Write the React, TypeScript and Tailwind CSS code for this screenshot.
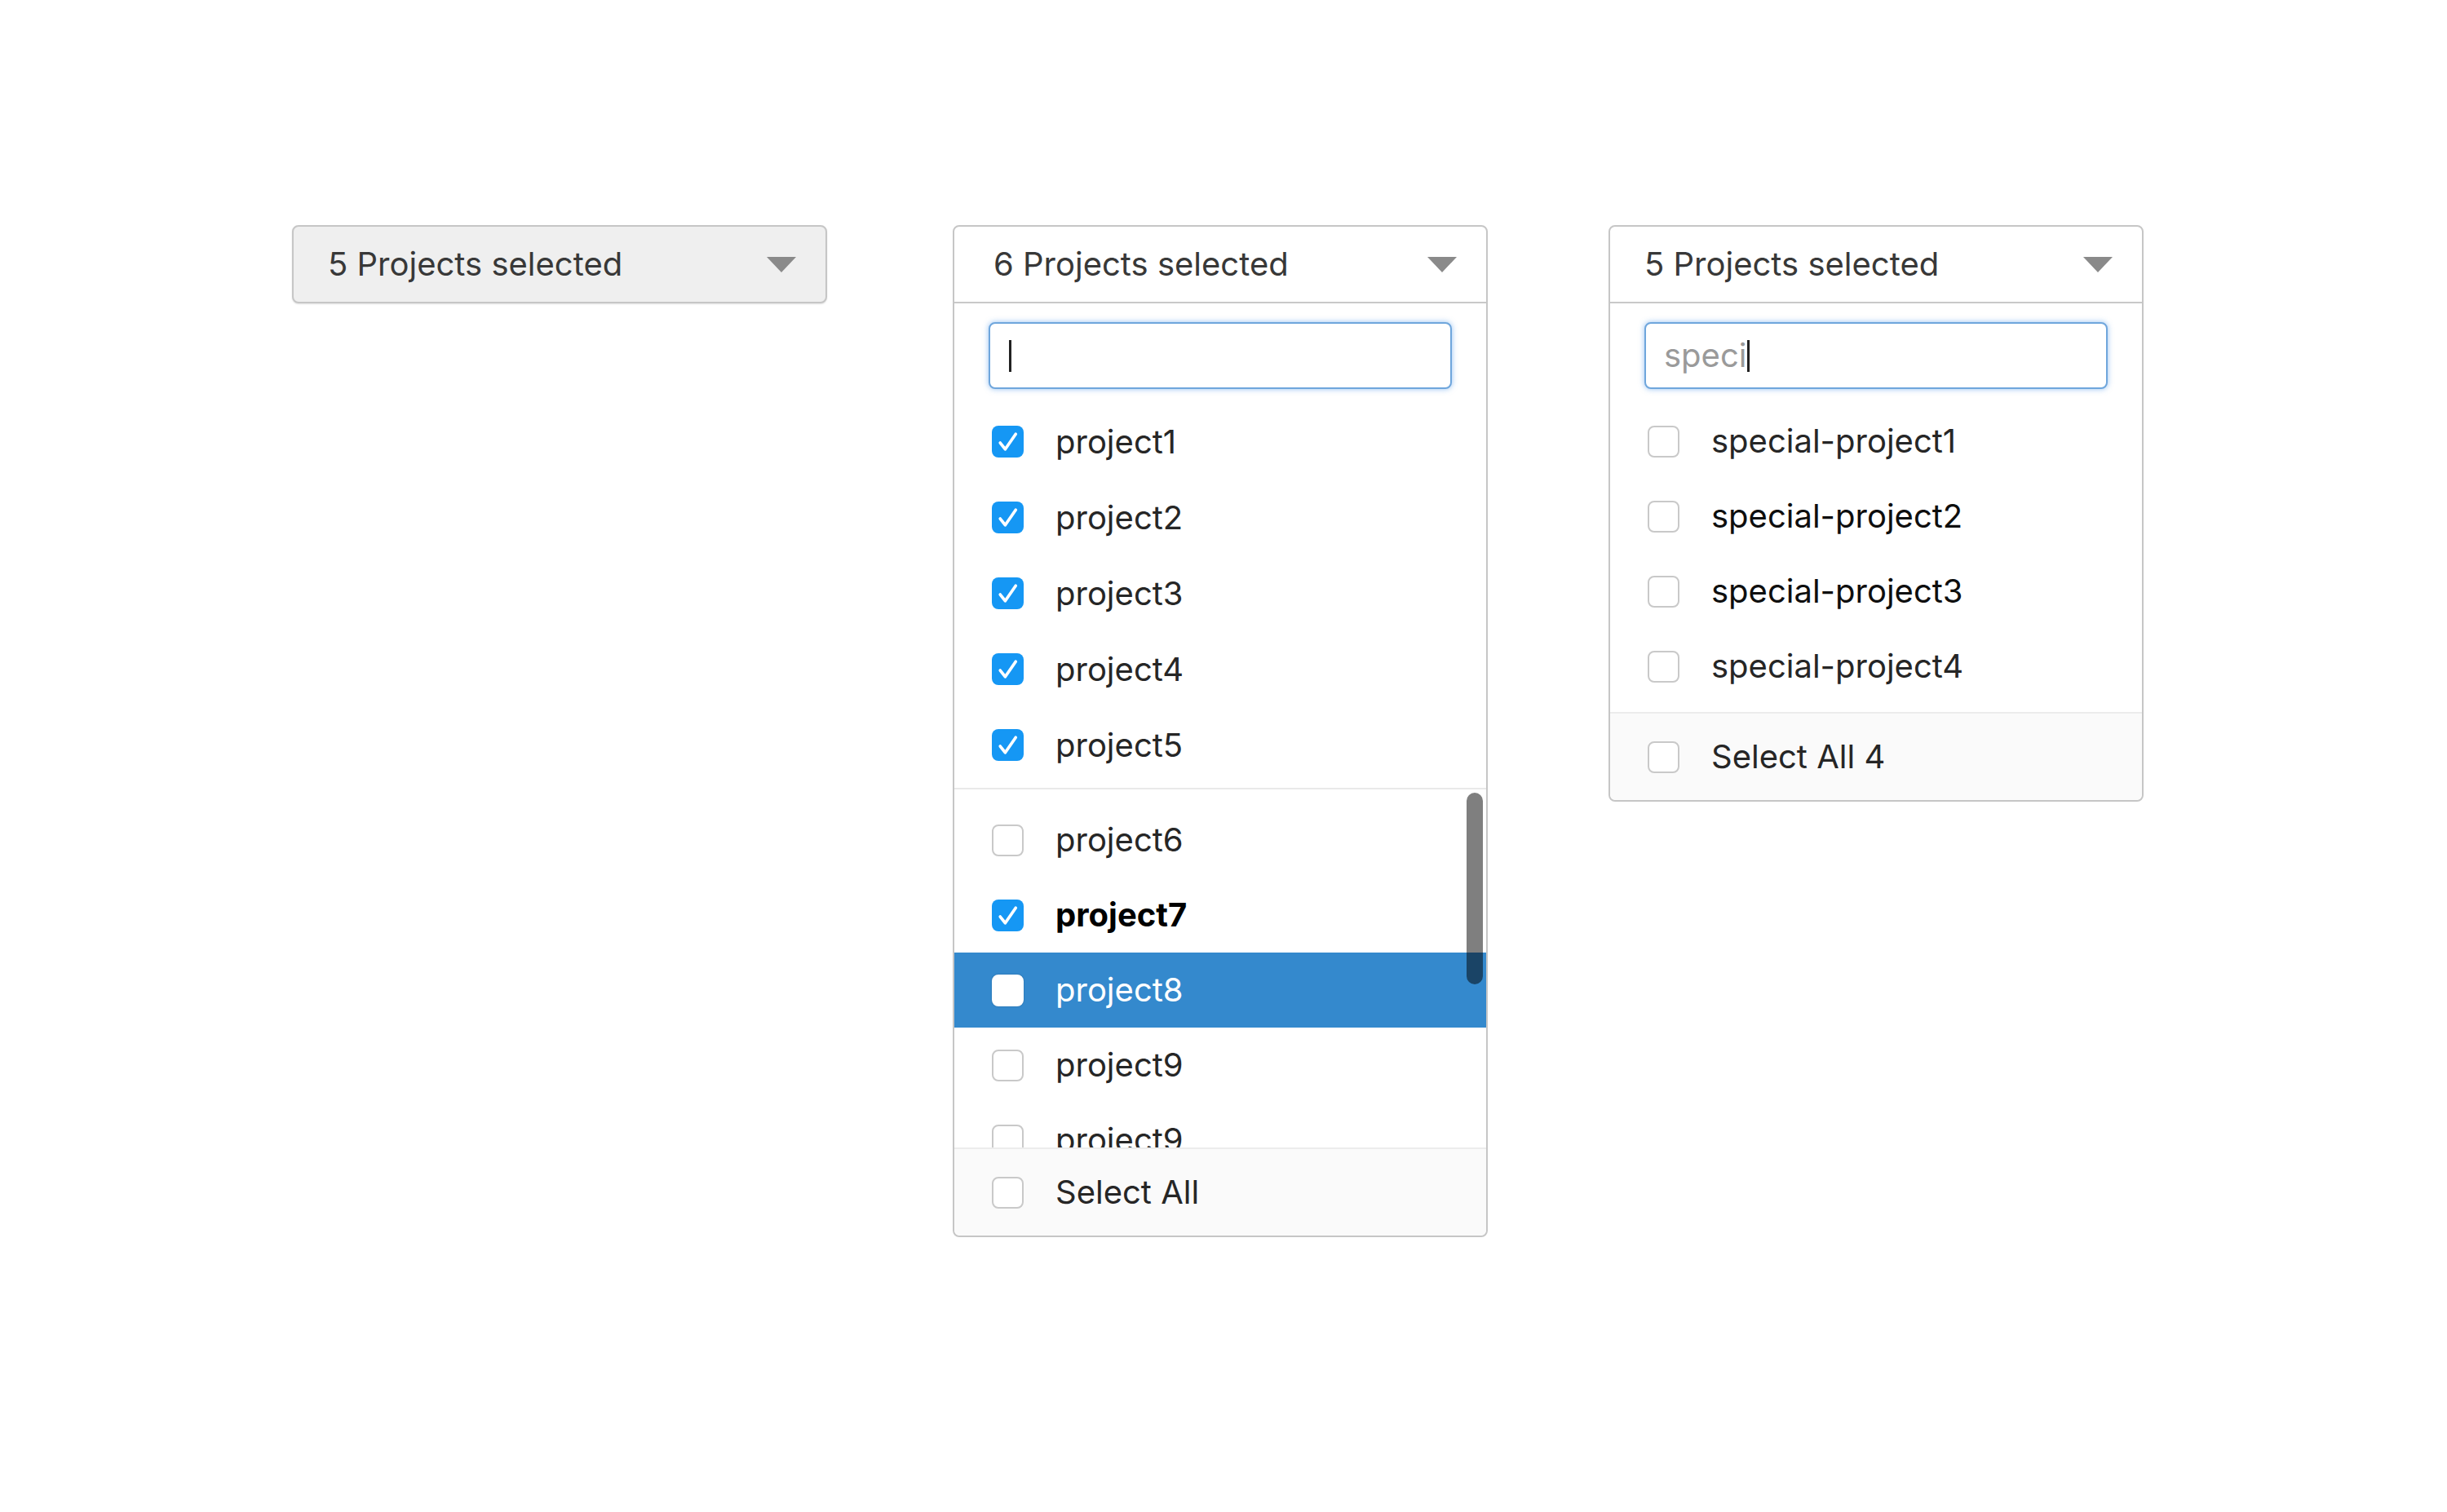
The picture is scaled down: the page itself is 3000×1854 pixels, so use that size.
import React from 'react';

type Item = {
  label: string;
  checked?: boolean;
  bold?: boolean;
  dark?: boolean;
  active?: boolean;
};

const font = { fontFamily: 'Inter, "Liberation Sans", Arial, sans-serif' };

function Arrow() {
  return (
    <svg width="36" height="19" viewBox="0 0 36 19" className="shrink-0">
      <polygon points="0,0 36,0 18,19" fill="#8a8a8a" />
    </svg>
  );
}

function Checkbox({ checked, active }: { checked?: boolean; active?: boolean }) {
  if (checked) {
    return (
      <span className="flex h-[39px] w-[39px] shrink-0 items-center justify-center rounded-[8px] bg-[#1597f4]">
        <svg width="39" height="39" viewBox="0 0 38 38">
          <path
            d="M10 20.5 L16 28 L28.5 10"
            fill="none"
            stroke="#fff"
            strokeWidth="3.6"
            strokeLinecap="round"
            strokeLinejoin="round"
          />
        </svg>
      </span>
    );
  }
  return (
    <span
      className={`h-[39px] w-[39px] shrink-0 rounded-[8px] border-2 bg-white ${
        active ? 'border-white shadow-[0_0_2px_rgba(0,0,0,0.25)]' : 'border-[#c9c9c9]'
      }`}
    />
  );
}

function Row({ item, h = 'h-[93px]' }: { item: Item; h?: string }) {
  const color = item.active
    ? 'text-white'
    : item.bold
    ? 'text-black font-bold'
    : item.dark
    ? 'text-[#0e0e0e]'
    : 'text-[#262626]';
  return (
    <div className={`flex ${h} items-center pl-[46px] ${item.active ? 'bg-[#3489cd]' : ''}`}>
      <Checkbox checked={item.checked} active={item.active} />
      <span className={`ml-[39px] text-[40px] leading-none ${color}`}>{item.label}</span>
    </div>
  );
}

function Header({ text, indent = 'pl-[42px]' }: { text: string; indent?: string }) {
  return (
    <div className={`flex h-[92px] items-center justify-between ${indent} pr-[36px]`}>
      <span className="text-[40px] leading-none text-[#383838]">{text}</span>
      <Arrow />
    </div>
  );
}

function Search({ value }: { value: string }) {
  return (
    <div className="mx-[42px] mt-[23px] flex h-[82px] items-center rounded-[8px] border-2 border-[#6fa6dc] bg-white pl-[22px] shadow-[0_0_7px_rgba(60,140,230,0.55)]">
      {value && <span className="text-[40px] leading-none text-[#9a9a9a]">{value}</span>}
      <span className="ml-[1px] h-[39px] w-[3px] bg-[#222]" />
    </div>
  );
}

function Footer({ label }: { label: string }) {
  return (
    <div className="flex h-[108px] items-center rounded-b-[8px] border-t-2 border-[#ececec] bg-[#fafafa] pl-[46px]">
      <Checkbox />
      <span className="ml-[39px] text-[40px] leading-none text-[#262626]">{label}</span>
    </div>
  );
}

const selected: Item[] = [
  { label: 'project1', checked: true },
  { label: 'project2', checked: true },
  { label: 'project3', checked: true },
  { label: 'project4', checked: true },
  { label: 'project5', checked: true },
];

const rest: Item[] = [
  { label: 'project6' },
  { label: 'project7', checked: true, bold: true },
  { label: 'project8', active: true },
  { label: 'project9' },
  { label: 'project9' },
];

const special: Item[] = [
  { label: 'special-project1' },
  { label: 'special-project2', dark: true },
  { label: 'special-project3', dark: true },
  { label: 'special-project4' },
];

export default function App() {
  return (
    <div className="h-[1854px] w-[3000px] bg-white" style={font}>
      <div className="flex items-start pl-[358px] pt-[276px]">
        {/* Closed */}
        <div className="w-[656px] rounded-[8px] border-2 border-[#c6c6c6] bg-[#efefef] shadow-[0_1px_2px_rgba(0,0,0,0.12)]">
          <Header text="5 Projects selected" />
        </div>

        {/* Open, scrolled */}
        <div className="ml-[154px] w-[656px] rounded-[8px] border-2 border-[#c6c6c6] bg-white">
          <div className="border-b-2 border-[#c9c9c9]">
            <Header text="6 Projects selected" indent="pl-[48px]" />
          </div>
          <Search value="" />
          <div className="pt-[18px] pb-[6px]">
            {selected.map((it) => (
              <Row key={it.label} item={it} />
            ))}
          </div>
          <div className="relative h-[441px] overflow-hidden border-t-2 border-[#e9e9e9] pt-[16px]">
            {rest.map((it, i) => (
              <Row key={i} item={it} h="h-[92px]" />
            ))}
            <div className="absolute right-[4px] top-[4px] h-[235px] w-[20px] rounded-full bg-black/50" />
          </div>
          <Footer label="Select All" />
        </div>

        {/* Open, filtered */}
        <div className="ml-[148px] w-[656px] rounded-[8px] border-2 border-[#c6c6c6] bg-white">
          <div className="border-b-2 border-[#c9c9c9]">
            <Header text="5 Projects selected" />
          </div>
          <Search value="speci" />
          <div className="pt-[18px] pb-[10px]">
            {special.map((it) => (
              <Row key={it.label} item={it} h="h-[92px]" />
            ))}
          </div>
          <Footer label="Select All 4" />
        </div>
      </div>
    </div>
  );
}
